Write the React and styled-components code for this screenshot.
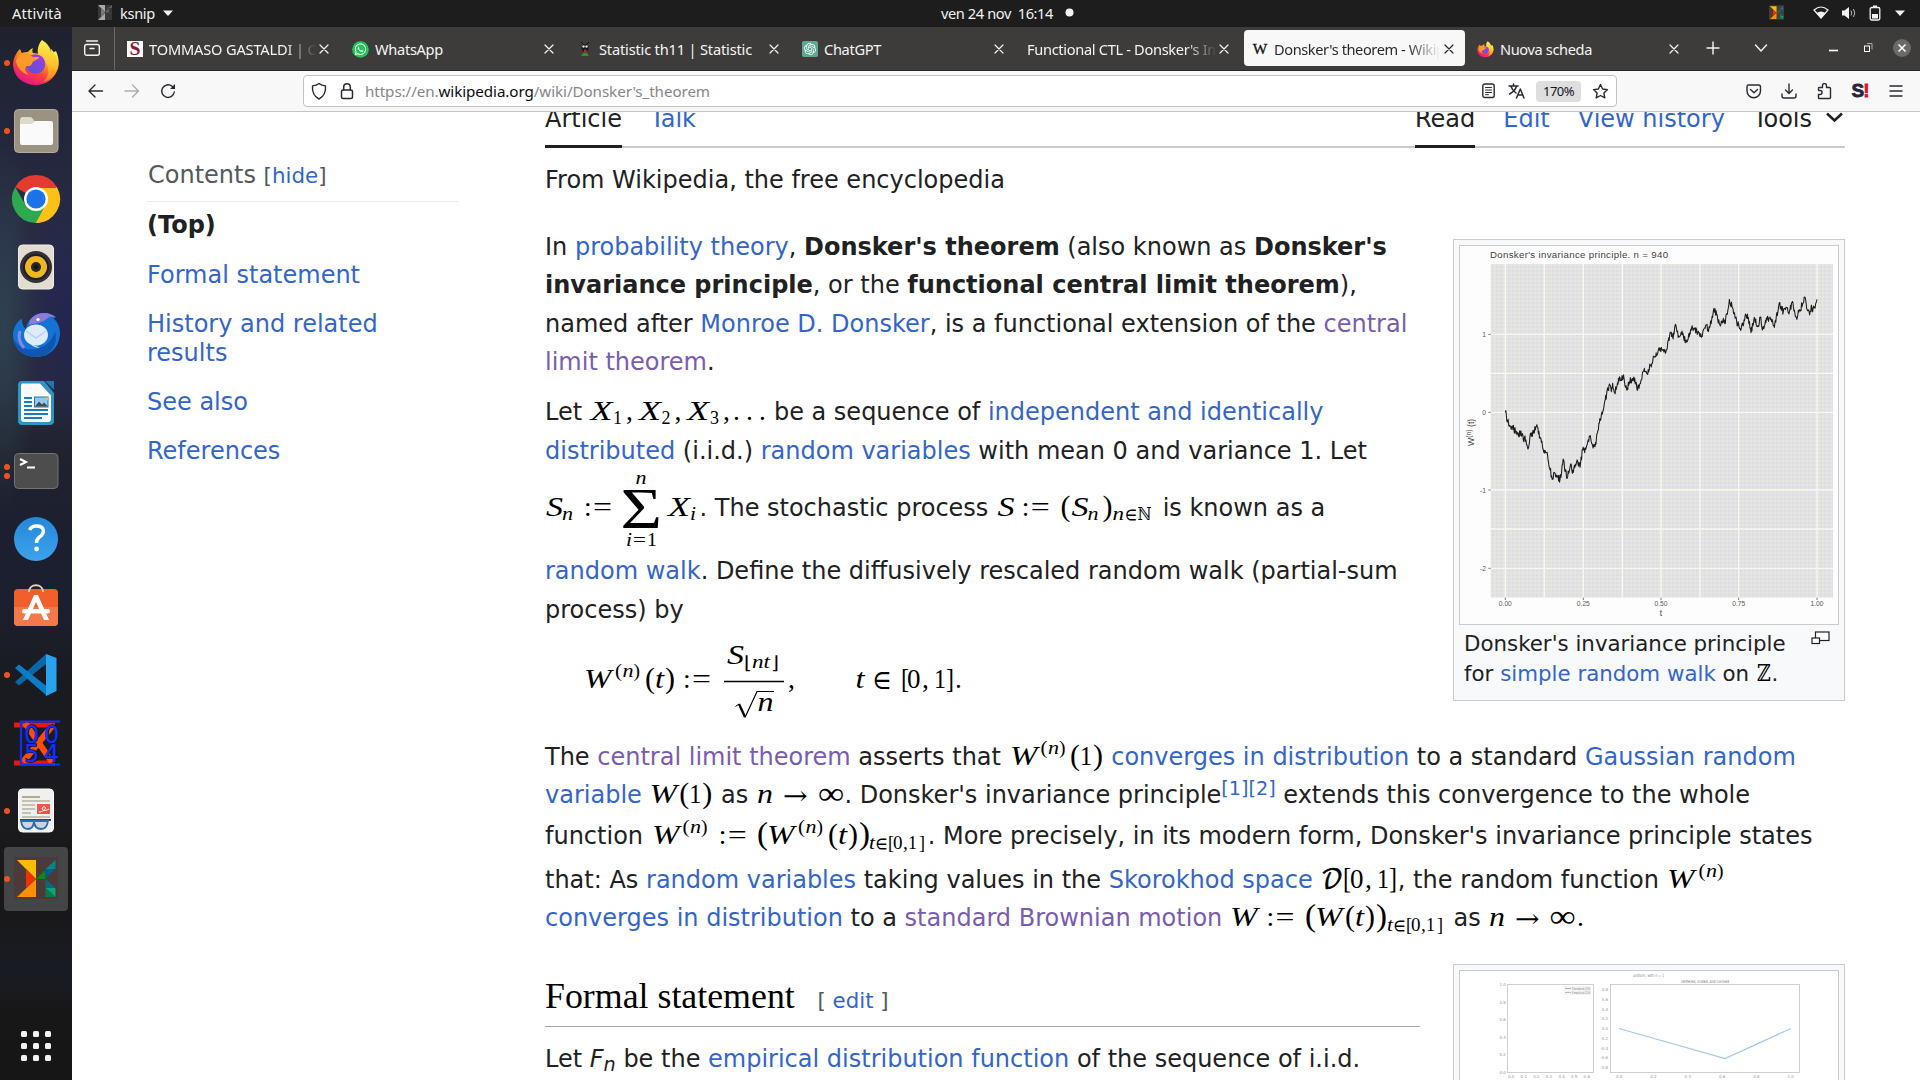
import React, { useLayoutEffect, useRef, useState } from 'react';
import styled, { createGlobalStyle, css } from 'styled-components';
import { FaWhatsapp } from 'react-icons/fa';
import { SiOpenai } from 'react-icons/si';

const GlobalStyle = createGlobalStyle`
  * { box-sizing: border-box; }
  body { margin: 0; background: #fff; overflow: hidden; }
`;

const UI_FONT = '"Noto Sans", "Open Sans", sans-serif';
const MATH_FONT = '"Liberation Serif", "DejaVu Serif", "DejaVu Sans", serif';
const SYMBOL_FONT = '"DejaVu Math TeX Gyre", "DejaVu Serif", serif';

/* ---------- shell ---------- */

const Desktop = styled.div`
  width: 1920px;
  height: 1080px;
  display: flex;
  flex-direction: column;
  overflow: hidden;
  font-family: ${UI_FONT};
`;

const TopBar = styled.header`
  height: 27px;
  flex: none;
  padding-bottom: 2px;
  background: #1d1d1d;
  color: #f2f2f2;
  display: grid;
  grid-template-columns: 941px 1fr auto;
  align-items: center;
`;

const BarGroup = styled.div`
  display: flex;
  align-items: center;
  padding-left: ${(p) => p.$pl || 0}px;
  gap: ${(p) => p.$gap || 0}px;
`;

const Main = styled.div`
  flex: 1;
  display: flex;
  min-height: 0;
`;

const FitBox = styled.span`
  display: block;
  flex: none;
  white-space: pre;
  overflow: ${(p) => (p.$clip ? 'hidden' : 'visible')};
  font-size: ${(p) => p.$size || 14.6}px;
  line-height: 20px;
  ${(p) => p.$clip && css`
    mask-image: linear-gradient(90deg, #000 calc(100% - 32px), transparent);
  `}
`;

/* A label whose tracking is adjusted so that it fills a given width. */
function Label({ width, clip, size, children }) {
  const ref = useRef(null);
  const [tracking, setTracking] = useState(0);
  useLayoutEffect(() => {
    const el = ref.current;
    const n = el.textContent.length;
    setTracking((width - el.getBoundingClientRect().width) / n);
  }, [width]);
  return (
    <FitBox $clip={clip} $size={size} style={{ width: clip || width }}>
      <span ref={ref} style={{ letterSpacing: tracking }}>{children}</span>
    </FitBox>
  );
}

/* ---------- dock ---------- */

const DockBar = styled.nav`
  width: 72px;
  flex: none;
  padding-top: 2px;
  display: flex;
  flex-direction: column;
  background:
    radial-gradient(ellipse 34px 190px at 4px 300px, rgba(52, 84, 92, 0.55), transparent),
    radial-gradient(ellipse 40px 130px at 66px 290px, rgba(32, 34, 92, 0.6), transparent),
    linear-gradient(180deg, #1f222d 0, #23263a 90px, #292c45 240px, #272a3f 350px, #20222e 430px,
      #1c1f30 500px, #1c1f2e 580px, #1a1b20 660px, #1b1b1f 780px, #171717 870px, #1a1c25 950px, #171717 985px, #161616 100%);
`;

const DockCell = styled.div`
  height: 68px;
  flex: none;
  display: grid;
  grid-template-columns: 4px 6px 1fr;
  align-items: center;
  margin-top: ${(p) => p.$mt || 0}px;
  svg { grid-column: 3; margin-left: 2px; display: block; overflow: visible; }
`;

const ActiveCell = styled(DockCell)`
  width: 64px;
  height: 64px;
  margin: 2px 0 2px 4px;
  border-radius: 4px;
  background: #444547;
  grid-template-columns: 0 6px 1fr;
`;

const Dots = styled.div`
  grid-column: 2;
  display: flex;
  flex-direction: column;
  gap: 3px;
  i { width: 6px; height: 6px; border-radius: 50%; background: #e95420; }
`;

function Icon48({ children }) {
  return <svg width="48" height="48" viewBox="0 0 48 48">{children}</svg>;
}

function FirefoxArt({ id }) {
  return (
    <>
      <defs>
        <linearGradient id={`${id}a`} x1="0.8" y1="0.1" x2="0.25" y2="0.95">
          <stop offset="0" stopColor="#fff44f" /><stop offset="0.35" stopColor="#ff980e" />
          <stop offset="0.65" stopColor="#ff3b47" /><stop offset="1" stopColor="#e31587" />
        </linearGradient>
        <linearGradient id={`${id}b`} x1="0.7" y1="0" x2="0.3" y2="1">
          <stop offset="0" stopColor="#a238f0" /><stop offset="1" stopColor="#5a55d0" />
        </linearGradient>
        <linearGradient id={`${id}c`} x1="0.6" y1="0" x2="0.5" y2="1">
          <stop offset="0" stopColor="#fff44f" /><stop offset="0.6" stopColor="#ffbd2a" /><stop offset="1" stopColor="#ff7a1f" />
        </linearGradient>
      </defs>
      <path d="M8 10c1 2 1 3 2 4 2-1 4-1 6-1 1-2 3-3 5-4-1 2-1 4 0 5l15 2 8-4c3 7 4 14 1 20-4 9-12 14-21 14C11 46 2 38 1 26c0-6 3-12 7-16z" fill={`url(#${id}a)`} />
      <path d="M30 1c6 4 8 7 9 12 0-2 0-3-1-4 6 5 8 12 8 17-1 9-7 15-15 17 6-5 7-13 3-19-2-3-5-5-8-9-1-5 1-11 4-14z" fill={`url(#${id}c)`} />
      <circle cx="23.500" cy="25" r="9.800" fill={`url(#${id}b)`} />
      <path d="M4 22c2-6 6-9 11-8l6 4 6 0c0 3-5 3-6 5-2 2-1 4-5 4-4 0-4 5 1 9-7-2-12-7-13-14z" fill="#ff9a2a" />
    </>
  );
}

const dockIcons = {
  firefox: <Icon48><FirefoxArt id="ffd" /></Icon48>,
  files: (
    <Icon48>
      <rect x="2.500" y="2.500" width="43.500" height="43" rx="4" fill="#9b9381" stroke="#b5ad9a" />
      <path d="M8 13q0-3 3-3h7q2 0 3 2l1 2h16v5H8z" fill="#dedacb" />
      <path d="M8 17h12l3-3h16q2 0 2 2v20q0 2-2 2H10q-2 0-2-2z" fill="#fafafa" />
    </Icon48>
  ),
  chrome: (
    <Icon48>
      <path d="M24 24L3.200 12A24 24 0 0 1 44.800 12z" fill="#e33b2e" />
      <path d="M24 24L44.800 12A24 24 0 0 1 24 48z" fill="#fbc116" />
      <path d="M24 24L34.400 30 24 48A24 24 0 0 1 3.200 12L13.600 30z" fill="#2da94f" />
      <path d="M24 13h20.800A24 24 0 0 1 24 48l9.500-18z" fill="#fbc116" />
      <circle cx="24" cy="24" r="12" fill="#fff" /><circle cx="24" cy="24" r="9.600" fill="#1a73e8" />
    </Icon48>
  ),
  rhythmbox: (
    <Icon48>
      <rect x="6.500" y="2" width="35" height="44" rx="4" fill="#e3ddd1" stroke="#f1ede4" />
      <circle cx="24" cy="24" r="16" fill="#33323a" /><circle cx="24" cy="24" r="13" fill="#1f1f24" />
      <circle cx="24" cy="24" r="11" fill="#efb823" /><circle cx="24" cy="24" r="5" fill="#26262b" />
      <circle cx="24" cy="24" r="2" fill="#111" />
    </Icon48>
  ),
  thunderbird: (
    <Icon48>
      <path d="M1 21c2-7 5-12 9-13 0 5 1 7 4 10 1-9 8-16 18-16 5 0 9 2 12 5l-3 0c5 4 7 10 7 16-1 14-11 23-24 23C10 46 0 36 1 21z" fill="#1673d6" />
      <path d="M1 26c4 11 16 15 26 11 9-3 14-9 16-17 4 15-6 26-19 26C12 46 2 38 1 26z" fill="#0f56b3" />
      <path d="M17 14c0-7 7-12 15-12 5 0 9 2 12 4-6-1-8 0-11 3-4 3-9 3-16 5z" fill="#8f79dc" />
      <ellipse cx="24" cy="24" rx="12" ry="10.500" fill="#dcecfb" />
      <path d="M14 20l10 7 10-7" fill="none" stroke="#b3d3f2" strokeWidth="1.500" />
      <path d="M18 33q5 1 10 4-8 0-12-7z" fill="#cfe4fa" />
      <path d="M8 20q-3 9 4 17" stroke="#7f8be6" strokeWidth="3" fill="none" />
      <circle cx="26" cy="8.500" r="1.600" fill="#fff" />
    </Icon48>
  ),
  writer: (
    <Icon48>
      <path d="M10 2h22l10 12v28q0 4-4 4H10q-4 0-4-4V6q0-4 4-4z" fill="#2f93c6" />
      <path d="M10 4.500h18l11 12V40q0 3-3 3H12q-3 0-3-3V6z" fill="#fafafa" />
      <path d="M33 2h9v9z" fill="#1f77aa" />
      <g stroke="#1a7db4" strokeWidth="1.800"><path d="M12 19h8M12 23h8M12 27h8M12 31h24M12 35h24M12 39h18" /></g>
      <rect x="22.500" y="18" width="13.500" height="10" fill="#8fcbf0" stroke="#1a7db4" />
      <path d="M23 27.500l4-5 3 3 2-2 4 4z" fill="#4b4b4b" /><path d="M33 18.500h3v3z" fill="#f8c325" />
    </Icon48>
  ),
  terminal: (
    <Icon48>
      <rect x="2.500" y="6.500" width="43.500" height="35" rx="4" fill="#4d4d4d" stroke="#73736f" />
      <path d="M8 12l6 3-6 3" stroke="#fff" strokeWidth="2" fill="none" /><path d="M15 20.500h8" stroke="#fff" strokeWidth="2" />
    </Icon48>
  ),
  help: (
    <Icon48>
      <defs><linearGradient id="hlp" x1="0" y1="0" x2="0" y2="1"><stop offset="0" stopColor="#2287d8" /><stop offset="1" stopColor="#3ea3ee" /></linearGradient></defs>
      <circle cx="24" cy="24" r="22" fill="url(#hlp)" />
      <path d="M17.500 15q2-4 7-4c9 0 8 8 3 11q-3 2-3 6" stroke="#fff" strokeWidth="3.400" fill="none" /><circle cx="24.500" cy="34" r="2.400" fill="#fff" />
    </Icon48>
  ),
  store: (
    <Icon48>
      <rect x="2" y="6" width="44" height="37" rx="4" fill="#f1602c" /><path d="M2 24h44v15q0 4-4 4H6q-4 0-4-4z" fill="#f3794a" />
      <path d="M17 9c0-9 14-9 14 0" stroke="#eed3a4" strokeWidth="2" fill="none" />
      <path d="M22 12h4l11 25h-5L24 19l-8 18h-5z" fill="#fff" /><rect x="10" y="26" width="28" height="4.600" rx="2.300" fill="#fff" />
    </Icon48>
  ),
  vscode: (
    <Icon48>
      <path d="M3 31l4 3.500L34 13V3z" fill="#0a68a8" />
      <path d="M3 17l4-3.500L35 35.500V45z" fill="#0d7cc8" />
      <path d="M34 3l10.500 4v33L34 45z" fill="#2aa3ef" />
    </Icon48>
  ),
  codeblocks: (
    <Icon48>
      <path d="M2 6h41M2 44h41" stroke="#f0140a" strokeWidth="5" />
      <path d="M13 4l27 39M41 6L11 43" stroke="#fb4d0c" strokeWidth="6" />
      <path d="M8 2.500h40M8 45.500h40M9 2v44" stroke="#1030f5" strokeWidth="2.200" fill="none" />
      <g fontFamily="DejaVu Sans, sans-serif" fontSize="24" fill="#1030ff" stroke="#0a1450" strokeWidth="1.400" paintOrder="stroke">
        <text x="12" y="23.500">0</text><text x="32" y="23.500">0</text><text x="12" y="43">5</text><text x="32" y="43">4</text>
      </g>
    </Icon48>
  ),
  evince: (
    <Icon48>
      <rect x="6.500" y="2" width="35" height="43" rx="4" fill="#f0f0ef" stroke="#fff" />
      <g stroke="#c6c0b4" strokeWidth="1.800"><path d="M10 14h28M10 18h13M10 22h13M10 26h9M10 30h28" /></g><path d="M10 10h18" stroke="#b1a992" strokeWidth="2" />
      <rect x="25" y="17" width="13" height="10" fill="#f2564b" /><path d="M27 25c4 0 8-4 6-5s-4 2-2 3 4 0 6-1" stroke="#fff" fill="none" />
      <path d="M8 33h31" stroke="#1d4f8f" strokeWidth="2" /><path d="M9 34q1 8 7 8 5 0 6-7 1 7 7 7 6 0 7-8z" fill="#cfd4d8" stroke="#2b6cb8" strokeWidth="1.800" />
    </Icon48>
  ),
};

function KsnipArt() {
  return (
    <>
      <rect x="2" y="2" width="44" height="42" fill="#4b3a38" />
      <path d="M5 5h19v19z" fill="#ffbb00" /><path d="M5 42h19V24z" fill="#ff8f00" />
      <path d="M14 14v19l10-9z" fill="#f03000" /><path d="M24 24l9.500-9v9z" fill="#0a8a10" />
      <path d="M33.500 14l10-9v9z" fill="#088" /><path d="M33.500 14h10l-10 10z" fill="#055a8c" />
      <path d="M33.500 24l10 9h-10z" fill="#066a7c" /><path d="M33.500 33h10v9z" fill="#0aa37c" /><path d="M33.500 33v9h10z" fill="#077a50" />
    </>
  );
}

const DOCK = [
  ['firefox', 1], ['files', 1], ['chrome', 0], ['rhythmbox', 0], ['thunderbird', 0], ['writer', 0], ['terminal', 2],
  ['help', 0], ['store', 0], ['vscode', 1], ['codeblocks', 0], ['evince', 1],
];

function Dock() {
  return (
    <DockBar>
      {DOCK.map(([name, dots]) => (
        <DockCell key={name}>
          <Dots>{Array.from({ length: dots }, (_, i) => <i key={i} />)}</Dots>
          {dockIcons[name]}
        </DockCell>
      ))}
      <ActiveCell>
        <Dots><i /></Dots>
        <Icon48><KsnipArt /></Icon48>
      </ActiveCell>
      <DockCell $mt={99}>
        <Icon48>
          {[9, 21, 33].map((y) => [9, 21, 33].map((x) => <rect key={`${x}${y}`} x={x} y={y} width="6" height="6" rx="1.500" fill="#f2f2f2" />))}
        </Icon48>
      </DockCell>
    </DockBar>
  );
}

/* ---------- browser chrome ---------- */

const Browser = styled.div`
  flex: 1;
  min-width: 0;
  display: flex;
  flex-direction: column;
`;

const TabStrip = styled.div`
  height: 44px;
  flex: none;
  background: #3d3c3a;
  border-bottom: 1px solid #2a282b;
  display: flex;
  align-items: center;
  color: #f5f5f5;
  padding-bottom: 1px;
`;

const Overview = styled.div`
  width: 43px;
  height: 43px;
  padding-left: 11px;
  display: flex;
  align-items: center;
  border-right: 1px solid #6a6967;
  margin-right: 4px;
`;

const Tab = styled.div`
  width: 221px;
  height: 36px;
  margin-right: 4px;
  flex: none;
  border-radius: 4px;
  padding: 2px 11px 0 8px;
  display: flex;
  align-items: center;
  background: ${(p) => (p.$active ? '#f8f8f8' : 'transparent')};
  color: ${(p) => (p.$active ? '#2b2a33' : '#f5f5f5')};
  > svg:first-child { margin-right: 6px; flex: none; }
  > svg:last-child { margin-left: auto; flex: none; }
`;

const StripTools = styled.div`
  flex: 1;
  display: flex;
  align-items: center;
  svg { flex: none; }
`;

const Toolbar = styled.div`
  height: 41px;
  flex: none;
  background: #f8f8f9;
  border-bottom: 1px solid #c4c4c5;
  display: flex;
  align-items: center;
  padding: 0 15px;
  color: #2b2a33;
`;

const NavButtons = styled.div`
  display: flex;
  gap: 18px;
  width: 216px;
`;

const UrlBox = styled.div`
  width: 1314px;
  height: 32px;
  border: 1px solid #c3c3c6;
  border-radius: 4px;
  background: #fff;
  display: flex;
  align-items: center;
  padding: 0 7px 0 6px;
  svg { flex: none; }
`;

const UrlText = styled.div`
  flex: 1;
  margin-left: 11px;
  color: #85858a;
  b { font-weight: 400; color: #0c0c0d; }
`;

const Zoom = styled.div`
  width: 45px;
  height: 21px;
  margin: 0 11px 0 11px;
  border-radius: 4px;
  background: #dedede;
  color: #15141a;
  display: flex;
  align-items: center;
  justify-content: center;
`;

const Actions = styled.div`
  margin-left: auto;
  display: flex;
  align-items: center;
  gap: 17px;
`;

const Snipper = styled.span`
  font: 900 19px/18px "Liberation Sans", sans-serif;
  width: 20px;
  text-align: center;
  letter-spacing: -1px;
  color: #2a2440;
  -webkit-text-stroke: 0.8px currentColor;
  em { font-style: normal; color: #e2102a; }
`;

const strokeProps = { fill: 'none', stroke: 'currentColor', strokeWidth: 1.4, strokeLinecap: 'round', strokeLinejoin: 'round' };

function Ico({ w = 16, h = 16, sw, children }) {
  return <svg width={w} height={h} viewBox={`0 0 ${w} ${h}`} {...strokeProps} strokeWidth={sw || 1.4}>{children}</svg>;
}

const Close = () => <Ico w={10} h={10} sw={1.2}><path d="M1 1l8 8M9 1L1 9" /></Ico>;

function BrowserTabs() {
  return (
    <TabStrip>
      <Overview>
        <Ico w={18}><rect x="1.700" y="4.500" width="14.600" height="10.800" rx="2" /><path d="M3.500 1h11M7 8.500h4" /></Ico>
      </Overview>
      <Tab>
        <svg width="16" height="16" viewBox="0 0 16 16"><rect width="16" height="16" fill="#fff" /><text x="2.500" y="14" fontFamily="Liberation Serif, serif" fontWeight="700" fontSize="18" fill="#8c1838" textLength="11" lengthAdjust="spacingAndGlyphs">S</text></svg>
        <Label width={219} clip={168}>TOMMASO GASTALDI | Corsi di s</Label><Close />
      </Tab>
      <Tab>
        <svg width="17" height="17" viewBox="0 0 17 17"><circle cx="8.500" cy="8.500" r="8.300" fill="#20c757" /><FaWhatsapp x="2" y="1.800" size="13" color="#fff" /></svg>
        <Label width={68}>WhatsApp</Label><Close />
      </Tab>
      <Tab>
        <svg width="16" height="16" viewBox="0 0 16 16"><path d="M4 1l3 3M12 1L9 4" stroke="#111" /><circle cx="8" cy="7" r="3.500" fill="#161616" /><circle cx="6.500" cy="5.500" r="1.200" fill="#ddd" /><circle cx="9.500" cy="5.500" r="1.200" fill="#ddd" /><path d="M7 8.500h2.500v3H7z" fill="#b12a2a" /><path d="M4 15l2-3h4l2 3z" fill="#3c8b2d" /></svg>
        <Label width={153}>Statistic th11 | Statistic</Label><Close />
      </Tab>
      <Tab>
        <svg width="16" height="16" viewBox="0 0 16 16"><rect width="16" height="16" rx="2" fill="#5fa793" /><SiOpenai x="2" y="2" size="12" color="#fff" /></svg>
        <Label width={57}>ChatGPT</Label><Close />
      </Tab>
      <Tab><Label width={204} clip={190}>Functional CTL - Donsker's Inva</Label><Close /></Tab>
      <Tab $active>
        <svg width="16" height="16" viewBox="0 0 16 16"><text x="0.800" y="13" fontFamily="Liberation Serif, serif" fontSize="15" fill="#111" stroke="#111" strokeWidth="0.300" textLength="14.500" lengthAdjust="spacingAndGlyphs">W</text></svg>
        <Label width={187} clip={166}>Donsker's theorem - Wikiped</Label><Close />
      </Tab>
      <Tab>
        <svg width="17" height="17" viewBox="0 0 48 48"><FirefoxArt id="fft" /></svg>
        <Label width={92}>Nuova scheda</Label><Close />
      </Tab>
      <StripTools>
        <BarGroup $pl={12} $gap={34}>
          <Ico w={14} h={14}><path d="M7 1v12M1 7h12" /></Ico>
          <Ico w={14} h={10}><path d="M1.500 2l5.500 6 5.500-6" /></Ico>
        </BarGroup>
        <BarGroup $pl={61} $gap={20}>
          <BarGroup $gap={25}>
            <svg width="9" height="9"><path d="M0 6.500h9" stroke="#fff" strokeWidth="1.600" /></svg>
            <svg width="10" height="10" fill="none" stroke="#fff"><rect x="1.500" y="3" width="5" height="5.500" /><path d="M4 0.500h5v6" stroke="#aaa" /></svg>
          </BarGroup>
          <svg width="18" height="18"><circle cx="9" cy="9" r="9" fill="#6a6a69" /><path d="M5.500 5.500l7 7M12.500 5.500l-7 7" stroke="#fff" strokeWidth="1.500" /></svg>
        </BarGroup>
      </StripTools>
    </TabStrip>
  );
}

function BrowserToolbar() {
  return (
    <Toolbar>
      <NavButtons>
        <Ico w={18} h={16}><path d="M15.500 8H2M8 2L2 8l6 6" /></Ico>
        <svg width="18" height="16" viewBox="0 0 18 16" {...strokeProps} stroke="#adadb0"><path d="M2 8h13.500M9.500 2l6 6-6 6" /></svg>
        <Ico w={18} h={16}><path d="M15.300 9A6.300 6.300 0 1 1 13 3.200l1.500 1.300" /><path d="M16 1v5h-5z" fill="currentColor" stroke="none" /></Ico>
      </NavButtons>
      <UrlBox>
        <Ico w={18} h={18}><path d="M9 1.500c2 1.700 4 2.200 6.500 2.400C16 10 14 14.500 9 17 4 14.500 2 10 2.500 3.900 5 3.700 7 3.200 9 1.500z" /></Ico>
        <BarGroup $pl={12}><Ico w={14} h={18} sw={1.5}><rect x="1.500" y="8" width="11" height="8.500" rx="1.500" /><path d="M3.700 8V5a3.300 3.300 0 0 1 6.600 0v3" /></Ico></BarGroup>
        <UrlText><Label width={345} size={15.2}>https://en.<b>wikipedia.org</b>/wiki/Donsker's_theorem</Label></UrlText>
        <Ico w={13} h={16}><rect x="0.800" y="1" width="11.400" height="13.500" rx="2" /><path d="M3.500 4.500h6M3.500 7h6M3.500 9.500h6M3.500 11.700h3" strokeWidth="1" /></Ico>
        <BarGroup $pl={13}><Ico w={17} h={16} sw={1.5}><path d="M1 3h9M5.500 1v2M8.500 3C7.500 7 4.500 9.500 1.500 11M3 3.500c1 3 3 5 5 6.500M8.500 15l3.800-9 3.700 9M10 12h5" /></Ico></BarGroup>
        <Zoom><Label width={31} size={13}>170%</Label></Zoom>
        <Ico w={17} h={17}><path d="M8.500 1.500l2.100 4.500 4.900.6-3.600 3.400.9 4.900-4.300-2.400-4.300 2.400.9-4.900L1.500 6.600l4.900-.6z" /></Ico>
      </UrlBox>
      <Actions>
        <Ico w={18} h={16}><path d="M3 2h10.500q2 0 2 2v4a6.500 6.500 0 0 1-13.500 0V4q0-2 1-2zM5.500 6.500L9 9.700l3.500-3.200" /></Ico>
        <Ico w={18} h={16}><path d="M9 1v9M5.500 7L9 10.500 12.500 7M2 11v2q0 2 2 2h10q2 0 2-2v-2" /></Ico>
        <Ico w={18} h={17}><path d="M3 7V5.500Q3 5 4 5h3V3a2 2 0 0 1 4 0v2h3q1 0 1 1v9q0 1-1 1H3.500q-.5 0-.5-1v-3h1.500a2 2 0 0 0 0-4H3" transform="translate(0.500 -0.500)" /></Ico>
        <Snipper>S<em>!</em></Snipper>
        <Ico w={18} h={14}><path d="M3 2h12M3 7h12M3 12h12" /></Ico>
      </Actions>
    </Toolbar>
  );
}

/* ---------- page ---------- */

const Page = styled.div`
  flex: 1;
  min-height: 0;
  overflow: hidden;
  background: #fff;
  display: flex;
  padding-left: 75px;
  gap: 86px;
  font: 24px/38px "DejaVu Sans", sans-serif;
  color: #202122;
`;

const Link = styled.span`
  color: ${(p) => (p.$visited ? '#795cb2' : '#3366cc')};
`;

const Toc = styled.aside`
  width: 312px;
  flex: none;
  padding-top: 44px;
`;

const TocTitle = styled.div`
  height: 46px;
  padding-left: 1px;
  border-bottom: 1px solid #eaecf0;
  color: #54595d;
  small { font-size: 21.4px; }
`;

const TocItem = styled.div`
  padding: ${(p) => (p.$bold ? '8.5px 60px 12px 0' : '9.5px 60px 11px 0')};
  line-height: 28.800px;
  font-weight: ${(p) => (p.$bold ? 700 : 400)};
  color: ${(p) => (p.$bold ? '#202122' : '#3366cc')};
`;

const Article = styled.article`
  width: 1300px;
  flex: none;
  margin-top: -12px;
`;

const PageTabs = styled.div`
  height: 48px;
  display: flex;
  gap: 28px;
  box-shadow: inset 0 -2px #c8ccd1;
`;

const PageTab = styled.div`
  height: 48px;
  white-space: nowrap;
  color: ${(p) => (p.$on ? '#202122' : '#3366cc')};
  border-bottom: 3px solid ${(p) => (p.$on ? '#202122' : 'transparent')};
  margin-left: ${(p) => (p.$push ? 'auto' : 0)};
`;

const ToolsMenu = styled.div`
  color: #202122;
  display: flex;
  align-items: flex-start;
  gap: 14px;
  padding-right: 2px;
  svg { margin-top: 12px; }
`;

const Line = styled.div`
  height: ${(p) => p.$h}px;
  line-height: 38px;
  white-space: pre;
  padding-left: ${(p) => p.$indent || 0}px;
  margin-top: ${(p) => p.$mt || 0}px;
`;

const Split = styled.div`
  display: flex;
  justify-content: space-between;
  align-items: flex-start;
`;

const Column = styled.div`
  width: ${(p) => p.$w}px;
`;

const Formula = styled.svg`
  display: inline-block;
  vertical-align: baseline;
  overflow: visible;
  fill: #000;
  font-family: ${MATH_FONT};
`;

const Sup = styled.span`
  font-size: 19.2px;
  line-height: 1;
  position: relative;
  top: -8px;
`;

const Sub = styled.span`
  font-size: 19.2px;
  line-height: 1;
  position: relative;
  top: 4px;
`;

const HeadingRow = styled.h2`
  margin: 0;
  height: 78px;
  padding-top: 24px;
  border-bottom: 1px solid #a2a9b1;
  font: 400 35.85px/46px "Liberation Serif", serif;
  color: #000;
  white-space: pre;
`;

const EditLink = styled.span`
  font: 21.3px/1 "DejaVu Sans", sans-serif;
  color: #54595d;
  margin-left: 16px;
`;

const Thumb = styled.figure`
  margin: ${(p) => p.$mt}px 0 0;
  width: 392px;
  height: ${(p) => p.$h}px;
  padding: 5px;
  border: 1px solid #c8ccd1;
  background: #f8f9fa;
`;

const ThumbImage = styled.div`
  width: 380px;
  height: 380px;
  border: 1px solid #c8ccd1;
  background: #fff;
  svg { display: block; }
`;

const Caption = styled.figcaption`
  display: flex;
  justify-content: space-between;
  padding: 4px 9px 0 5px;
  font-size: 21.35px;
  line-height: 30.2px;
  white-space: pre;
  > svg { margin-top: 2px; }
`;

/* A formula occupies from..to on its line; glyph positions share that scale and y is measured from the baseline. */
function Math_({ from, to, glyphs, children }) {
  return (
    <Formula width={to - from} height="20" viewBox={`${from} -20 ${to - from} 20`}>
      {glyphs.map(([x, w, text, o = {}], i) => (
        <text
          key={i}
          x={x}
          y={o.y || 0}
          fontSize={o.s || 27.5}
          fontStyle={o.i ? 'italic' : 'normal'}
          fontFamily={o.f}
          stroke={o.bold ? '#000' : undefined}
          strokeWidth={o.bold}
          textLength={w || undefined}
          lengthAdjust="spacingAndGlyphs"
        >
          {text}
        </text>
      ))}
      {children}
    </Formula>
  );
}

const it = { i: 1 };
const small = (y) => ({ s: 19.5, y });
const smallIt = (y) => ({ s: 19.5, y, i: 1 });
const W = (x) => [x - 1, 27.5, 'W', it];
const supN = (x, y = -11) => [[x, 7, '(', small(y)], [x + 7.5, 11, 'n', smallIt(y)], [x + 18.5, 6.5, ')', small(y)]];
const assign = (x) => [[x - 2, 0, ':', { y: 0 }], [x + 7, 19, '=', { f: 'Liberation Serif' }]];
const call = (x, arg, w, italic) => [[x - 1, 10, '(', { s: 29 }], [x + 9, w, arg, italic ? it : {}], [x + 10 + w, 10, ')', { s: 29 }]];
const toInf = (n, a, b) => [[n, 16, 'n', it], [a, 26, '→', { f: SYMBOL_FONT, s: 24 }], [b, 26, '∞', { s: 32, y: 1 }]];
const index = (x) => [
  [x, 6, 't', smallIt(5)], [x + 6.5, 12, '∈', { s: 18, y: 5, f: SYMBOL_FONT }], [x + 19, 6, '[', small(5)], [x + 24, 9.5, '0', small(5)],
  [x + 34, 0, ',', small(5)], [x + 39, 9, '1', small(5)], [x + 50, 6, ']', small(5)],
];

const WALK = [196,547,203,575,212,590,217,588,228,610,236,620,243,603,250,630,255,618,264,657,270,618,280,610,289,590,300,622,310,660,320,668,330,720,335,738,350,735,360,748,371,690,375,725,383,740,392,702,397,730,410,695,420,712,428,658,434,668,448,618,455,640,465,650,478,580,490,540,500,490,510,465,514,485,518,460,524,488,540,443,552,445,560,480,568,455,580,445,590,470,597,475,613,415,620,430,631,405,647,380,664,352,676,370,692,308,698,322,708,287,716,318,726,303,737,335,755,292,770,300,784,322,797,285,804,298,815,270,822,235,830,255,841,288,850,265,856,280,868,208,876,230,890,275,903,300,918,255,925,262,933,308,943,262,953,290,961,262,967,300,984,262,995,275,1003,292,1018,218,1030,245,1038,232,1047,252,1056,218,1069,262,1080,240,1094,202,1100,235,1109,255,1114,225,1118,245,1131,208];

function walkPath() {
  let seed = 17;
  const rnd = () => { seed = (seed * 16807) % 2147483647; return seed / 2147483647 - 0.5; };
  let d = `M${WALK[0]} ${WALK[1]}`;
  for (let i = 2; i < WALK.length; i += 2) {
    const [x0, y0, x1, y1] = WALK.slice(i - 2, i + 2);
    const steps = Math.max(2, Math.round((x1 - x0) / 1.5));
    for (let k = 1; k <= steps; k += 1) {
      const t = k / steps;
      const j = k === steps ? 0 : rnd() * 22;
      d += `L${(x0 + (x1 - x0) * t).toFixed(1)} ${(y0 + (y1 - y0) * t + j).toFixed(1)}`;
    }
  }
  return d;
}

function InvarianceChart() {
  const xs = [[196, '0.00'], [430, '0.25'], [663, '0.50'], [896, '0.75'], [1131, '1.00']];
  const ys = [[313, '1'], [547, '0'], [780, '-1'], [1015, '-2']];
  return (
    <svg width="378" height="378" viewBox="60 48 1134 1134" fontFamily="Liberation Sans, sans-serif" fill="#5a5a5a">
      <defs>
        <pattern id="dither" width="12" height="12" patternUnits="userSpaceOnUse">
          <rect width="12" height="12" fill="#e3e3e6" /><rect width="6" height="6" fill="#dcdce8" /><rect x="6" y="6" width="6" height="6" fill="#e6e6dd" />
        </pattern>
      </defs>
      <rect x="60" y="48" width="1134" height="1134" fill="#fdfdfd" />
      <rect x="152" y="102" width="1027" height="1001" fill="url(#dither)" />
      <g stroke="#f8f8f3" strokeWidth="4">
        {[196, 313, 430, 547, 663, 780, 896, 1131].map((x) => <path key={x} d={`M${x} 102V1103`} />)}
        {[313, 430, 547, 780, 897, 1015].map((y) => <path key={y} d={`M152 ${y}H1179`} />)}
      </g>
      <path d={walkPath()} fill="none" stroke="#1c1c1c" strokeWidth="3.200" strokeLinejoin="round" />
      <text x="150" y="83" fontSize="29" fill="#444" textLength="534">Donsker's invariance principle. n = 940</text>
      {xs.map(([x, t]) => <g key={t}><path d={`M${x} 1103v7`} stroke="#777" strokeWidth="3" /><text x={x} y="1128" fontSize="20" textAnchor="middle">{t}</text></g>)}
      {ys.map(([y, t]) => <g key={t}><path d={`M145 ${y}h7`} stroke="#777" strokeWidth="3" /><text x="138" y={y + 8} fontSize="20" textAnchor="end">{t}</text></g>)}
      <text x="663" y="1159" fontSize="25" textAnchor="middle" fill="#444">t</text>
      <g transform="translate(102 648) rotate(-90)" fill="#444"><text fontSize="26">W</text><text x="25" y="-10" fontSize="20">(n)</text><text x="57" fontSize="26">(t)</text></g>
    </svg>
  );
}

function EmpiricalChart() {
  const tick = { fontSize: 4, fill: '#999' };
  return (
    <svg width="378" height="378" viewBox="0 0 378 378" fontFamily="DejaVu Sans, sans-serif">
      <g fill="none" stroke="#cfcfcf"><rect x="47.500" y="13.500" width="86" height="88" /><rect x="150.500" y="13.500" width="189" height="88" /></g>
      <rect x="104" y="15" width="27" height="9" fill="#f4f4f4" />
      <path d="M105 17.500h6" stroke="#8ebbdc" /><path d="M105 21.500h6" stroke="#bbb" />
      <g fontSize="3.600" fill="#888"><text x="112" y="19" textLength="18.500" lengthAdjust="spacingAndGlyphs">Standard CDF</text><text x="112" y="23" textLength="18.500" lengthAdjust="spacingAndGlyphs">Empirical CDF</text></g>
      <text x="173" y="6" fontSize="4.400" fill="#888" textLength="31" lengthAdjust="spacingAndGlyphs">uniform, with n = 1</text>
      <text x="221" y="12" fontSize="4.400" fill="#777" textLength="48" lengthAdjust="spacingAndGlyphs">centered, scaled, and normed</text>
      <path d="M159 57.500L265 87.500 331 57.500" fill="none" stroke="#a5c9e4" strokeWidth="1.200" />
      {['1.0', '0.8', '0.6', '0.4', '0.2', '0.0'].map((t, i) => <text key={t} x="39.500" y={15 + i * 17.5} {...tick}>{t}</text>)}
      {['0.8', '0.6', '0.4', '0.2', '0.0', '-0.2', '-0.4', '-0.6', '-0.8'].map((t, i) => <text key={t} x="148" y={20 + i * 9.750} textAnchor="end" {...tick}>{t}</text>)}
      {[0, 1, 2, 3, 4, 5, 6].map((i) => <text key={i} x={48 + i * 12.600} y="107" {...tick}>{`0.${i}`}</text>)}
      {['0.0', '0.2', '0.4', '0.6', '0.8', '1.0'].map((t, i) => <text key={t} x={156 + i * 34.300} y="107" {...tick}>{t}</text>)}
    </svg>
  );
}

function WikiPage() {
  return (
    <Page>
      <Toc>
        <TocTitle>Contents <small>[<Link>hide</Link>]</small></TocTitle>
        <TocItem $bold>(Top)</TocItem>
        <TocItem>Formal statement</TocItem>
        <TocItem>History and related results</TocItem>
        <TocItem>See also</TocItem>
        <TocItem>References</TocItem>
      </Toc>
      <Article>
        <PageTabs>
          <PageTab $on>Article</PageTab>
          <PageTab>Talk</PageTab>
          <PageTab $on $push>Read</PageTab>
          <PageTab>Edit</PageTab>
          <PageTab>View history</PageTab>
          <ToolsMenu>Tools<svg width="17" height="11" fill="none" stroke="#202122" strokeWidth="2.600"><path d="M1 1.500l7.500 7 7.500-7" /></svg></ToolsMenu>
        </PageTabs>
        <Line $h={54} $mt={13}>From Wikipedia, the free encyclopedia</Line>
        <Split>
          <Column $w={875}>
            <Line $h={38} $mt={13}>In <Link>probability theory</Link>, <b>Donsker's theorem</b> (also known as <b>Donsker's</b></Line>
            <Line $h={39}><b>invariance principle</b>, or the <b>functional central limit theorem</b>),</Line>
            <Line $h={38}>named after <Link>Monroe D. Donsker</Link>, is a functional extension of the <Link $visited>central</Link></Line>
            <Line $h={50}><Link $visited>limit theorem</Link>.</Line>
            <Line $h={39}>
              Let <Math_ from={590} to={766.5} glyphs={[
                [590.5, 22, 'X', it], [613, 9, '1', small(4)], [626, 0, ','], [639, 22, 'X', it], [661.5, 9, '2', small(4)], [674.5, 0, ','],
                [687, 22, 'X', it], [710, 9, '3', small(4)], [723, 0, ','], [733, 0, '.'], [746, 0, '.'], [759, 0, '.'],
              ]} /> be a sequence of <Link>independent and identically</Link>
            </Line>
            <Line $h={57}><Link>distributed</Link> (i.i.d.) <Link>random variables</Link> with mean 0 and variance 1. Let</Line>
            <Line $h={63}>
              <Math_ from={545} to={699.5} glyphs={[
                [546, 17, 'S', it], [562, 11, 'n', smallIt(4)], ...assign(586), [635.5, 11, 'n', smallIt(-32)],
                [620.5, 41.500, 'Σ', { s: 58, y: 12 }], [626, 6, 'i', smallIt(29.5)], [633, 13, '=', small(29.5)], [647, 10, '1', small(29.5)],
                [668, 22, 'X', it], [690, 6, 'i', smallIt(4)],
              ]} />. The stochastic process <Math_ from={995.5} to={1154.5} glyphs={[
                [997, 17, 'S', it], ...assign(1023.3), [1060, 10, '(', { s: 29 }], [1071, 17, 'S', it], [1087, 11, 'n', smallIt(4)], [1102, 10, ')', { s: 29 }],
                [1112, 11.5, 'n', smallIt(4)], [1124.5, 12, '∈', { s: 18, y: 4, f: SYMBOL_FONT }], [1136.5, 15, 'ℕ', { s: 18, y: 4, f: SYMBOL_FONT }],
              ]} /> is known as a
            </Line>
            <Line $h={39}><Link>random walk</Link>. Define the diffusively rescaled random walk (partial-sum</Line>
            <Line $h={70}>process) by</Line>
            <Line $h={77} $indent={39}>
              <Math_ from={584} to={962} glyphs={[
                W(585), ...supN(615), ...call(646, 't', 9, true), ...assign(685), [727, 17, 'S', { i: 1, y: -24 }],
                [744, 8, '⌊', { s: 18, y: -19.5, f: 'DejaVu Sans' }], [752, 18, 'nt', smallIt(-20)], [771, 8, '⌋', { s: 18, y: -19.5, f: 'DejaVu Sans' }],
                [788, 0, ','], [757.5, 16, 'n', { i: 1, y: 22.5 }],
                [855.5, 9, 't', it], [873, 18, '∈', { s: 27, y: 0, f: SYMBOL_FONT }], [901, 8, '['], [907, 13.5, '0'], [922, 0, ','], [934, 12, '1'], [946, 8, ']'], [955, 0, '.'],
              ]}>
                <path d="M724 -6.500h60" stroke="#000" strokeWidth="1.500" />
                <path d="M735.500 18.500l3.500-2.500" fill="none" stroke="#000" strokeWidth="1" />
                <path d="M739 16l6 13" fill="none" stroke="#000" strokeWidth="2.400" />
                <path d="M745 29.500L757 3.500H774" fill="none" stroke="#000" strokeWidth="1.200" />
              </Math_>
            </Line>
          </Column>
          <Thumb $mt={24} $h={462}>
            <ThumbImage><InvarianceChart /></ThumbImage>
            <Caption>
              <div>{'Donsker\'s invariance principle\nfor '}<Link>simple random walk</Link> on <Math_ from={0} to={15.5} glyphs={[[0, 15.5, 'ℤ', { s: 23, f: SYMBOL_FONT }]]} />.</div>
              <svg width="19" height="14" fill="#fff" stroke="#202122" strokeWidth="1.200"><rect x="4.500" y="1" width="13.500" height="8.500" /><rect x="1" y="7" width="7.500" height="5.500" /></svg>
            </Caption>
          </Thumb>
        </Split>
        <Line $h={38}>The <Link $visited>central limit theorem</Link> asserts that <Math_ from={1008.5} to={1103.5} glyphs={[W(1010.5), ...supN(1040), ...call(1070.4, '1', 12)]} /> <Link>converges in distribution</Link> to a standard <Link>Gaussian random</Link></Line>
        <Line $h={41}><Link>variable</Link> <Math_ from={649.5} to={713.5} glyphs={[W(651), ...call(680.7, '1', 12)]} /> as <Math_ from={756} to={844.5} glyphs={toInf(757, 782.5, 818)} />. Donsker's invariance principle<Sup><Link>[1][2]</Link></Sup> extends this convergence to the whole</Line>
        <Line $h={44}>function <Math_ from={651} to={928} glyphs={[W(653), ...supN(682.5), ...assign(720.7), [757, 11, '(', { s: 31 }], W(768), ...supN(798), ...call(829, 't', 9, true), [859, 11, ')', { s: 31 }], ...index(869)]} />. More precisely, in its modern form, Donsker's invariance principle states</Line>
        <Line $h={38}>that: As <Link>random variables</Link> taking values in the <Link>Skorokhod space</Link> <Math_ from={1320} to={1397.5} glyphs={[[1321, 22, '𝒟', { s: 26, f: SYMBOL_FONT, bold: 0.7 }], [1343, 8, '[', { s: 29 }], [1350, 13.500, '0'], [1365, 0, ','], [1377, 12, '1'], [1389, 8, ']', { s: 29 }]]} />, the random function <Math_ from={1666} to={1723} glyphs={[W(1667), ...supN(1697.5)]} /></Line>
        <Split>
          <Column $w={875}>
            <Line $h={50}><Link>converges in distribution</Link> to a <Link $visited>standard Brownian motion</Link> <Math_ from={1230} to={1446} glyphs={[W(1231), ...assign(1268.5), [1305, 11, '(', { s: 31 }], W(1316), ...call(1346, 't', 9, true), [1376, 11, ')', { s: 31 }], ...index(1387)]} /> as <Math_ from={1488} to={1585} glyphs={[...toInf(1489, 1514.5, 1549.5), [1577, 0, '.']]} /></Line>
            <HeadingRow>Formal statement<EditLink> [ <Link>edit</Link> ]</EditLink></HeadingRow>
            <Line $h={40} $mt={13}>Let <i>F</i><Sub><i>n</i></Sub> be the <Link>empirical distribution function</Link> of the sequence of i.i.d.</Line>
          </Column>
          <Thumb $mt={65} $h={462}>
            <ThumbImage><EmpiricalChart /></ThumbImage>
          </Thumb>
        </Split>
      </Article>
    </Page>
  );
}

export default function App() {
  return (
    <Desktop>
      <GlobalStyle />
      <TopBar>
        <BarGroup $pl={12}>
          <Label width={50}>Attività</Label>
          <BarGroup $pl={36} $gap={8}>
            <svg width="14" height="15" viewBox="0 0 14 15"><rect width="14" height="15" fill="#383838" /><path d="M0 0h7v7zM0 15h7V8z" fill="#a9a9a9" /><path d="M3 3v9l4-4.500z" fill="#777" /><path d="M10 3l4-3v3zM7 7l4-4v5z" fill="#5d5d5d" /></svg>
            <Label width={35}>ksnip</Label>
            <svg width="10" height="6"><path d="M0 0.500h10L5 6z" fill="#f2f2f2" /></svg>
          </BarGroup>
        </BarGroup>
        <BarGroup $gap={12}>
          <Label width={112}>ven 24 nov  16:14</Label>
          <svg width="9" height="9"><circle cx="4.500" cy="4.500" r="4" fill="#f2f2f2" /></svg>
        </BarGroup>
        <BarGroup>
          <svg width="15" height="15" viewBox="2 2 44 42"><KsnipArt /></svg>
          <BarGroup $pl={29} $gap={12}>
            <svg width="16" height="13" viewBox="0 0 16 13"><path d="M1 4Q8-2 15 4L8 12z" fill="none" stroke="#f2f2f2" strokeWidth="1.200" /><path d="M3.500 7Q8 4 12.500 7L8 12.500z" fill="#f2f2f2" /></svg>
            <svg width="16" height="14" viewBox="0 0 16 14"><path d="M1 4.500h2.500L8 1v12L3.500 9.500H1z" fill="#f2f2f2" /><path d="M10 4.500q1.600 2.500 0 5M12.500 3q2.500 4 0 8" stroke="#bbb" fill="none" /></svg>
            <svg width="12" height="16" viewBox="0 0 12 16"><rect x="1.200" y="2.500" width="9.600" height="12.500" rx="1.500" fill="none" stroke="#f2f2f2" strokeWidth="1.300" /><path d="M4 0.500h4v2H4z" fill="#f2f2f2" /><rect x="3" y="9" width="6" height="4.500" fill="#f2f2f2" /></svg>
          </BarGroup>
          <BarGroup $pl={14}><svg width="25" height="6"><path d="M0 0.500h10L5 6z" fill="#f2f2f2" /></svg></BarGroup>
        </BarGroup>
      </TopBar>
      <Main>
        <Dock />
        <Browser>
          <BrowserTabs />
          <BrowserToolbar />
          <WikiPage />
        </Browser>
      </Main>
    </Desktop>
  );
}
